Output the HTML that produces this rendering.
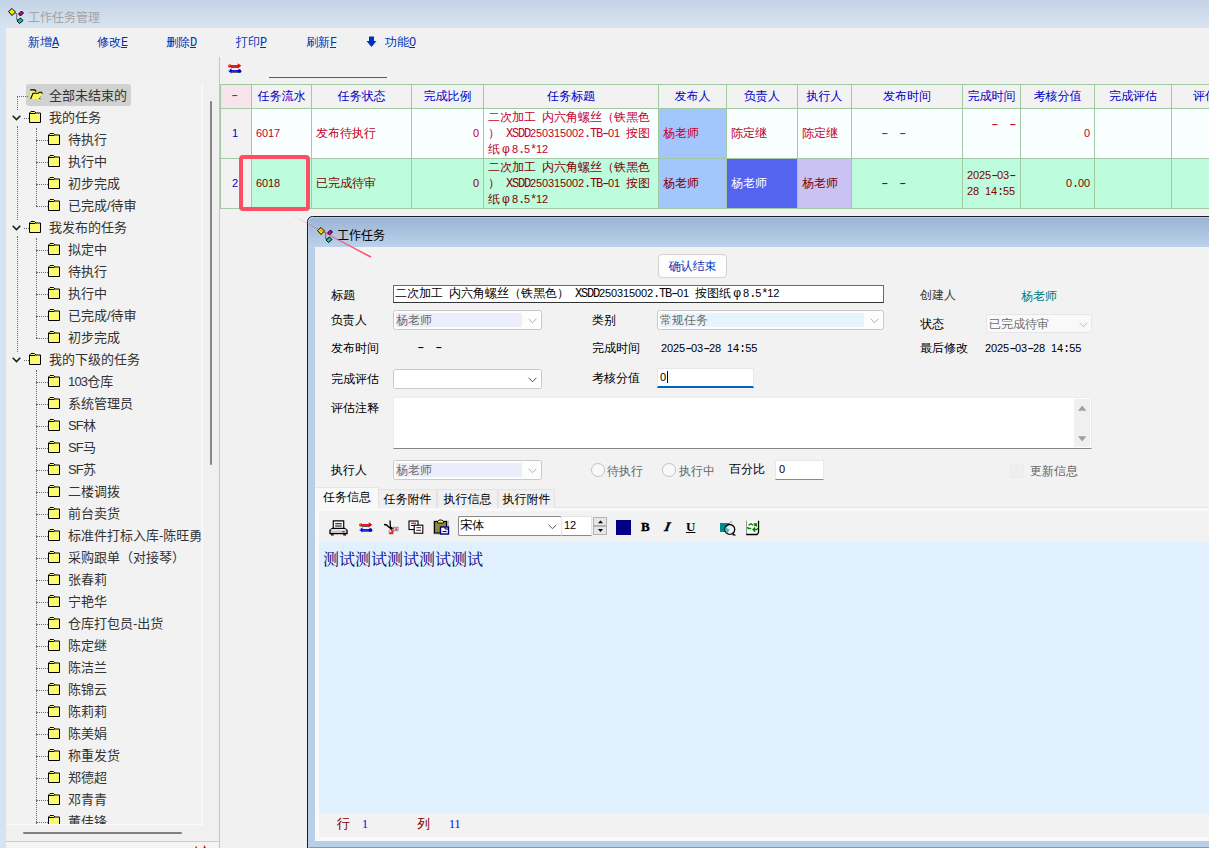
<!DOCTYPE html>
<html lang="zh-CN">
<head>
<meta charset="utf-8">
<title>工作任务管理</title>
<style>
*{box-sizing:border-box;margin:0;padding:0}
html,body{width:1209px;height:848px;overflow:hidden;background:#f0f0f0}
body{position:relative;font-family:"Liberation Sans","WenQuanYi Zen Hei Sharp","WenQuanYi Zen Hei",sans-serif;font-size:12px;color:#000;line-height:14px}
.a{position:absolute;white-space:nowrap}
.yh{font-family:"Liberation Sans","Noto Sans CJK SC",sans-serif}
.m{font-family:"Liberation Mono","WenQuanYi Zen Hei Sharp","WenQuanYi Zen Hei",monospace;letter-spacing:-1.2px}
.m i{font-family:"Liberation Sans",sans-serif;font-style:normal;font-size:11px;letter-spacing:-0.116px}
.m b{display:inline-block;font-weight:normal;transform:scaleX(1.55)}
.ls{letter-spacing:-0.8px}
.phi{display:inline-block;width:12px;text-align:center}
svg{position:absolute;overflow:visible}
/* main window */
#titlebar{left:0;top:0;width:1209px;height:28px;background:linear-gradient(#c3d3e6,#d9e4f0)}
#lstrip{left:0;top:28px;width:6px;height:820px;background:#d6e3f2}
#main{left:6px;top:28px;width:1203px;height:820px;background:#f1f1f1}
#apptitle{left:28px;top:10px;font-size:12px;line-height:16px;color:#a3a3a3}
.menu{top:35px;color:#0033b3;height:14px}
/* tree */
#tree{left:6px;top:84px;width:197px;height:741px;background:#f2f2f2;overflow:hidden}
.ti{position:absolute;height:22px;line-height:23px;font-size:13px;color:#333;white-space:nowrap;font-family:"Liberation Sans","Noto Sans CJK SC",sans-serif}
.sel{position:absolute;left:20px;top:0;width:105px;height:22px;background:#d1d1d1;border-radius:3px}
.dv{position:absolute;width:0;border-left:1px dotted #6a6a6a}
.dh{position:absolute;height:0;border-top:1px dotted #6a6a6a}
/* grid */
#grid{left:220px;top:84px;width:989px;height:126px;overflow:hidden}
.c{position:absolute;border-right:1px solid #a3c9a3;border-bottom:1px solid #a3c9a3;white-space:nowrap;overflow:hidden}
.h{top:0;height:25px;line-height:23px;text-align:center;color:#0000c8;background:#f2f2f2;border-top:1px solid #a3c9a3}
.r1{top:25px;height:50px;line-height:49px;color:#c4002b;background:#f9fefe;padding-left:4px}
.r2{top:75px;height:50px;line-height:49px;color:#800000;background:#bdfcdc;padding-left:4px}
.ml{line-height:16px;padding-top:0}
.m,.m i,.phi{line-height:0}
.rt{text-align:right;padding-right:4px}
/* dialog */
#dlg{left:307px;top:216px;width:910px;height:640px;border:1.5px solid #1c1c1c;border-radius:7px 0 0 0;background:#b8cfe9;overflow:hidden}
#dtitle{left:0;top:0;width:910px;height:30px;background:linear-gradient(#9bb5d6,#bdd2ea)}
#dbody{left:7px;top:29px;width:900px;height:593px;background:#f2f2f2;border-left:1px solid #fafafa}
.lb{position:absolute;white-space:nowrap;height:14px;line-height:14px;color:#000}
.cb{position:absolute;border:1px solid #c9c9c9;border-radius:2.5px;background:#fdfdfd;height:20px}
.cb i{position:absolute;left:2px;top:2px;bottom:2px;right:19px;background:#ecedfb}
.cb b{position:absolute;left:2px;top:2px;font-weight:normal;color:#6d6d6d;line-height:14px}
.tab{position:absolute;top:489px;height:19px;line-height:18px;text-align:center;border:1px solid #e3e3e3;border-bottom:none;background:#f0f0f0}
</style>
</head>
<body>
<div class="a" id="titlebar"></div>
<div class="a" id="lstrip"></div>
<div class="a" id="main"></div>
<svg style="left:8px;top:8px" width="17" height="17" viewBox="0 0 17 17">
<path d="M7 5.5 H8.6 V11.5 H10.5" fill="none" stroke="#7a7a7a" stroke-width="1.2"/>
<path d="M0.5 3.5 L4 0.5 L7.5 4 L4 7.5Z" fill="#f2ea00" stroke="#000" stroke-width="1"/>
<path d="M10.5 6 L13.5 3 L15.5 5 L12.5 8Z" fill="#d000a0" stroke="#000" stroke-width="1"/>
<path d="M9 13 L12.5 10 L15 12.5 L11.5 15.5Z" fill="#00c8c8" stroke="#000" stroke-width="1"/>
</svg>
<div class="a yh" id="apptitle">工作任务管理</div>
<div class="a menu" style="left:28px">新增<u class="m">A</u></div>
<div class="a menu" style="left:97px">修改<u class="m">E</u></div>
<div class="a menu" style="left:166px">删除<u class="m">D</u></div>
<div class="a menu" style="left:236px">打印<u class="m">P</u></div>
<div class="a menu" style="left:306px">刷新<u class="m">F</u></div>
<svg style="left:366px;top:36px" width="11" height="12" viewBox="0 0 11 12"><path d="M3 0.5H8V5H10.5L5.5 11L0.5 5H3Z" fill="#0030c0"/></svg>
<div class="a menu" style="left:385px">功能<u class="m">O</u></div>
<div class="a" style="left:203px;top:57px;width:16px;height:791px;background:#f0f0f0"></div>
<div class="a" style="left:219px;top:57px;width:1px;height:791px;background:#a9cdf2"></div>
<div class="a" style="left:202px;top:84px;width:1px;height:741px;background:#fbfbfb;z-index:2"></div>
<div class="a" style="left:210px;top:101px;width:2px;height:364px;background:#858585;border-radius:1px"></div>
<div class="a" style="left:6px;top:825px;width:213px;height:23px;background:#f0f0f0"></div>
<div class="a" style="left:23px;top:832px;width:159px;height:2px;background:#808080;border-radius:1px"></div>
<div class="a" style="left:6px;top:824px;width:197px;height:1px;background:#fbfbfb;z-index:2"></div>
<div class="a" style="left:6px;top:841px;width:213px;height:1px;background:#b5d3f0"></div>
<div class="a" style="left:6px;top:842px;width:213px;height:6px;background:#f4f4f4"></div>
<svg style="left:194px;top:845px" width="13" height="3" viewBox="0 0 13 3"><path d="M1 3L2 0.8L3.2 3Z" fill="#f00000"/><path d="M0.8 3L1.5 1.5L1.5 3Z" fill="#f0e000"/><path d="M9.6 3L10 0L12 3Z" fill="#f00000"/></svg>
<div class="a" id="tree">
<div class="sel"></div>
<div class="dv" style="left:11px;top:12px;height:14px"></div>
<div class="dv" style="left:11px;top:42px;height:94px"></div>
<div class="dv" style="left:11px;top:152px;height:116px"></div>
<div class="dh" style="left:11px;top:12px;width:11px"></div>
<div class="dh" style="left:18px;top:34px;width:5px"></div>
<div class="dh" style="left:18px;top:144px;width:5px"></div>
<div class="dh" style="left:18px;top:276px;width:5px"></div>
<div class="dv" style="left:30px;top:44px;height:78px"></div>
<div class="dv" style="left:30px;top:154px;height:100px"></div>
<div class="dv" style="left:30px;top:286px;height:460px"></div>
<div class="dh" style="left:30px;top:56px;width:12px"></div>
<div class="dh" style="left:30px;top:78px;width:12px"></div>
<div class="dh" style="left:30px;top:100px;width:12px"></div>
<div class="dh" style="left:30px;top:122px;width:12px"></div>
<div class="dh" style="left:30px;top:166px;width:12px"></div>
<div class="dh" style="left:30px;top:188px;width:12px"></div>
<div class="dh" style="left:30px;top:210px;width:12px"></div>
<div class="dh" style="left:30px;top:232px;width:12px"></div>
<div class="dh" style="left:30px;top:254px;width:12px"></div>
<div class="dh" style="left:30px;top:298px;width:12px"></div>
<div class="dh" style="left:30px;top:320px;width:12px"></div>
<div class="dh" style="left:30px;top:342px;width:12px"></div>
<div class="dh" style="left:30px;top:364px;width:12px"></div>
<div class="dh" style="left:30px;top:386px;width:12px"></div>
<div class="dh" style="left:30px;top:408px;width:12px"></div>
<div class="dh" style="left:30px;top:430px;width:12px"></div>
<div class="dh" style="left:30px;top:452px;width:12px"></div>
<div class="dh" style="left:30px;top:474px;width:12px"></div>
<div class="dh" style="left:30px;top:496px;width:12px"></div>
<div class="dh" style="left:30px;top:518px;width:12px"></div>
<div class="dh" style="left:30px;top:540px;width:12px"></div>
<div class="dh" style="left:30px;top:562px;width:12px"></div>
<div class="dh" style="left:30px;top:584px;width:12px"></div>
<div class="dh" style="left:30px;top:606px;width:12px"></div>
<div class="dh" style="left:30px;top:628px;width:12px"></div>
<div class="dh" style="left:30px;top:650px;width:12px"></div>
<div class="dh" style="left:30px;top:672px;width:12px"></div>
<div class="dh" style="left:30px;top:694px;width:12px"></div>
<div class="dh" style="left:30px;top:716px;width:12px"></div>
<div class="dh" style="left:30px;top:738px;width:12px"></div>
<svg style="left:24px;top:4.6px" width="13" height="11" viewBox="0 0 13 11"><path d="M0.3 1.5H5L6 3H11L12.2 4.5L10 10.2H0.5Z" fill="#f6f65a"/><path d="M0.2 0.9H4.8L6.2 2.7" fill="none" stroke="#000" stroke-width="1.3"/><path d="M0.6 10L3 4.2H8.5L9.5 3.2H11.5L12.3 4.8" fill="none" stroke="#000" stroke-width="1.1"/><path d="M9.6 10L10.6 7.5" stroke="#000" stroke-width="1.1" stroke-dasharray="1.2 1.2"/></svg>
<div class="ti" style="left:43px;top:0px">全部未结束的</div>
<svg style="left:6px;top:31px" width="9" height="6" viewBox="0 0 9 6"><path d="M0.7 0.8L4.5 4.6L8.3 0.8" fill="none" stroke="#1a1a1a" stroke-width="1.5"/></svg>
<svg style="left:23px;top:27px" width="12" height="12" viewBox="0 0 12 12"><path d="M0.5 11.5V2L2 0.5H5.5L7 2H11.5V11.5Z" fill="#fbfb72" stroke="#000" stroke-width="1"/><path d="M1 2.5H6.5" stroke="#000" stroke-width="1"/></svg>
<div class="ti" style="left:43px;top:22px">我的任务</div>
<svg style="left:42px;top:49px" width="12" height="12" viewBox="0 0 12 12"><path d="M0.5 11.5V2L2 0.5H5.5L7 2H11.5V11.5Z" fill="#fbfb72" stroke="#000" stroke-width="1"/><path d="M1 2.5H6.5" stroke="#000" stroke-width="1"/></svg>
<div class="ti" style="left:62px;top:44px">待执行</div>
<svg style="left:42px;top:71px" width="12" height="12" viewBox="0 0 12 12"><path d="M0.5 11.5V2L2 0.5H5.5L7 2H11.5V11.5Z" fill="#fbfb72" stroke="#000" stroke-width="1"/><path d="M1 2.5H6.5" stroke="#000" stroke-width="1"/></svg>
<div class="ti" style="left:62px;top:66px">执行中</div>
<svg style="left:42px;top:93px" width="12" height="12" viewBox="0 0 12 12"><path d="M0.5 11.5V2L2 0.5H5.5L7 2H11.5V11.5Z" fill="#fbfb72" stroke="#000" stroke-width="1"/><path d="M1 2.5H6.5" stroke="#000" stroke-width="1"/></svg>
<div class="ti" style="left:62px;top:88px">初步完成</div>
<svg style="left:42px;top:115px" width="12" height="12" viewBox="0 0 12 12"><path d="M0.5 11.5V2L2 0.5H5.5L7 2H11.5V11.5Z" fill="#fbfb72" stroke="#000" stroke-width="1"/><path d="M1 2.5H6.5" stroke="#000" stroke-width="1"/></svg>
<div class="ti" style="left:62px;top:110px">已完成/待审</div>
<svg style="left:6px;top:141px" width="9" height="6" viewBox="0 0 9 6"><path d="M0.7 0.8L4.5 4.6L8.3 0.8" fill="none" stroke="#1a1a1a" stroke-width="1.5"/></svg>
<svg style="left:23px;top:137px" width="12" height="12" viewBox="0 0 12 12"><path d="M0.5 11.5V2L2 0.5H5.5L7 2H11.5V11.5Z" fill="#fbfb72" stroke="#000" stroke-width="1"/><path d="M1 2.5H6.5" stroke="#000" stroke-width="1"/></svg>
<div class="ti" style="left:43px;top:132px">我发布的任务</div>
<svg style="left:42px;top:159px" width="12" height="12" viewBox="0 0 12 12"><path d="M0.5 11.5V2L2 0.5H5.5L7 2H11.5V11.5Z" fill="#fbfb72" stroke="#000" stroke-width="1"/><path d="M1 2.5H6.5" stroke="#000" stroke-width="1"/></svg>
<div class="ti" style="left:62px;top:154px">拟定中</div>
<svg style="left:42px;top:181px" width="12" height="12" viewBox="0 0 12 12"><path d="M0.5 11.5V2L2 0.5H5.5L7 2H11.5V11.5Z" fill="#fbfb72" stroke="#000" stroke-width="1"/><path d="M1 2.5H6.5" stroke="#000" stroke-width="1"/></svg>
<div class="ti" style="left:62px;top:176px">待执行</div>
<svg style="left:42px;top:203px" width="12" height="12" viewBox="0 0 12 12"><path d="M0.5 11.5V2L2 0.5H5.5L7 2H11.5V11.5Z" fill="#fbfb72" stroke="#000" stroke-width="1"/><path d="M1 2.5H6.5" stroke="#000" stroke-width="1"/></svg>
<div class="ti" style="left:62px;top:198px">执行中</div>
<svg style="left:42px;top:225px" width="12" height="12" viewBox="0 0 12 12"><path d="M0.5 11.5V2L2 0.5H5.5L7 2H11.5V11.5Z" fill="#fbfb72" stroke="#000" stroke-width="1"/><path d="M1 2.5H6.5" stroke="#000" stroke-width="1"/></svg>
<div class="ti" style="left:62px;top:220px">已完成/待审</div>
<svg style="left:42px;top:247px" width="12" height="12" viewBox="0 0 12 12"><path d="M0.5 11.5V2L2 0.5H5.5L7 2H11.5V11.5Z" fill="#fbfb72" stroke="#000" stroke-width="1"/><path d="M1 2.5H6.5" stroke="#000" stroke-width="1"/></svg>
<div class="ti" style="left:62px;top:242px">初步完成</div>
<svg style="left:6px;top:273px" width="9" height="6" viewBox="0 0 9 6"><path d="M0.7 0.8L4.5 4.6L8.3 0.8" fill="none" stroke="#1a1a1a" stroke-width="1.5"/></svg>
<svg style="left:23px;top:269px" width="12" height="12" viewBox="0 0 12 12"><path d="M0.5 11.5V2L2 0.5H5.5L7 2H11.5V11.5Z" fill="#fbfb72" stroke="#000" stroke-width="1"/><path d="M1 2.5H6.5" stroke="#000" stroke-width="1"/></svg>
<div class="ti" style="left:43px;top:264px">我的下级的任务</div>
<svg style="left:42px;top:291px" width="12" height="12" viewBox="0 0 12 12"><path d="M0.5 11.5V2L2 0.5H5.5L7 2H11.5V11.5Z" fill="#fbfb72" stroke="#000" stroke-width="1"/><path d="M1 2.5H6.5" stroke="#000" stroke-width="1"/></svg>
<div class="ti" style="left:62px;top:286px"><span class="ls">103</span>仓库</div>
<svg style="left:42px;top:313px" width="12" height="12" viewBox="0 0 12 12"><path d="M0.5 11.5V2L2 0.5H5.5L7 2H11.5V11.5Z" fill="#fbfb72" stroke="#000" stroke-width="1"/><path d="M1 2.5H6.5" stroke="#000" stroke-width="1"/></svg>
<div class="ti" style="left:62px;top:308px">系统管理员</div>
<svg style="left:42px;top:335px" width="12" height="12" viewBox="0 0 12 12"><path d="M0.5 11.5V2L2 0.5H5.5L7 2H11.5V11.5Z" fill="#fbfb72" stroke="#000" stroke-width="1"/><path d="M1 2.5H6.5" stroke="#000" stroke-width="1"/></svg>
<div class="ti" style="left:62px;top:330px"><span class="ls">SF</span>林</div>
<svg style="left:42px;top:357px" width="12" height="12" viewBox="0 0 12 12"><path d="M0.5 11.5V2L2 0.5H5.5L7 2H11.5V11.5Z" fill="#fbfb72" stroke="#000" stroke-width="1"/><path d="M1 2.5H6.5" stroke="#000" stroke-width="1"/></svg>
<div class="ti" style="left:62px;top:352px"><span class="ls">SF</span>马</div>
<svg style="left:42px;top:379px" width="12" height="12" viewBox="0 0 12 12"><path d="M0.5 11.5V2L2 0.5H5.5L7 2H11.5V11.5Z" fill="#fbfb72" stroke="#000" stroke-width="1"/><path d="M1 2.5H6.5" stroke="#000" stroke-width="1"/></svg>
<div class="ti" style="left:62px;top:374px"><span class="ls">SF</span>苏</div>
<svg style="left:42px;top:401px" width="12" height="12" viewBox="0 0 12 12"><path d="M0.5 11.5V2L2 0.5H5.5L7 2H11.5V11.5Z" fill="#fbfb72" stroke="#000" stroke-width="1"/><path d="M1 2.5H6.5" stroke="#000" stroke-width="1"/></svg>
<div class="ti" style="left:62px;top:396px">二楼调拨</div>
<svg style="left:42px;top:423px" width="12" height="12" viewBox="0 0 12 12"><path d="M0.5 11.5V2L2 0.5H5.5L7 2H11.5V11.5Z" fill="#fbfb72" stroke="#000" stroke-width="1"/><path d="M1 2.5H6.5" stroke="#000" stroke-width="1"/></svg>
<div class="ti" style="left:62px;top:418px">前台卖货</div>
<svg style="left:42px;top:445px" width="12" height="12" viewBox="0 0 12 12"><path d="M0.5 11.5V2L2 0.5H5.5L7 2H11.5V11.5Z" fill="#fbfb72" stroke="#000" stroke-width="1"/><path d="M1 2.5H6.5" stroke="#000" stroke-width="1"/></svg>
<div class="ti" style="left:62px;top:440px">标准件打标入库-陈旺勇</div>
<svg style="left:42px;top:467px" width="12" height="12" viewBox="0 0 12 12"><path d="M0.5 11.5V2L2 0.5H5.5L7 2H11.5V11.5Z" fill="#fbfb72" stroke="#000" stroke-width="1"/><path d="M1 2.5H6.5" stroke="#000" stroke-width="1"/></svg>
<div class="ti" style="left:62px;top:462px">采购跟单（对接琴）</div>
<svg style="left:42px;top:489px" width="12" height="12" viewBox="0 0 12 12"><path d="M0.5 11.5V2L2 0.5H5.5L7 2H11.5V11.5Z" fill="#fbfb72" stroke="#000" stroke-width="1"/><path d="M1 2.5H6.5" stroke="#000" stroke-width="1"/></svg>
<div class="ti" style="left:62px;top:484px">张春莉</div>
<svg style="left:42px;top:511px" width="12" height="12" viewBox="0 0 12 12"><path d="M0.5 11.5V2L2 0.5H5.5L7 2H11.5V11.5Z" fill="#fbfb72" stroke="#000" stroke-width="1"/><path d="M1 2.5H6.5" stroke="#000" stroke-width="1"/></svg>
<div class="ti" style="left:62px;top:506px">宁艳华</div>
<svg style="left:42px;top:533px" width="12" height="12" viewBox="0 0 12 12"><path d="M0.5 11.5V2L2 0.5H5.5L7 2H11.5V11.5Z" fill="#fbfb72" stroke="#000" stroke-width="1"/><path d="M1 2.5H6.5" stroke="#000" stroke-width="1"/></svg>
<div class="ti" style="left:62px;top:528px">仓库打包员-出货</div>
<svg style="left:42px;top:555px" width="12" height="12" viewBox="0 0 12 12"><path d="M0.5 11.5V2L2 0.5H5.5L7 2H11.5V11.5Z" fill="#fbfb72" stroke="#000" stroke-width="1"/><path d="M1 2.5H6.5" stroke="#000" stroke-width="1"/></svg>
<div class="ti" style="left:62px;top:550px">陈定继</div>
<svg style="left:42px;top:577px" width="12" height="12" viewBox="0 0 12 12"><path d="M0.5 11.5V2L2 0.5H5.5L7 2H11.5V11.5Z" fill="#fbfb72" stroke="#000" stroke-width="1"/><path d="M1 2.5H6.5" stroke="#000" stroke-width="1"/></svg>
<div class="ti" style="left:62px;top:572px">陈洁兰</div>
<svg style="left:42px;top:599px" width="12" height="12" viewBox="0 0 12 12"><path d="M0.5 11.5V2L2 0.5H5.5L7 2H11.5V11.5Z" fill="#fbfb72" stroke="#000" stroke-width="1"/><path d="M1 2.5H6.5" stroke="#000" stroke-width="1"/></svg>
<div class="ti" style="left:62px;top:594px">陈锦云</div>
<svg style="left:42px;top:621px" width="12" height="12" viewBox="0 0 12 12"><path d="M0.5 11.5V2L2 0.5H5.5L7 2H11.5V11.5Z" fill="#fbfb72" stroke="#000" stroke-width="1"/><path d="M1 2.5H6.5" stroke="#000" stroke-width="1"/></svg>
<div class="ti" style="left:62px;top:616px">陈莉莉</div>
<svg style="left:42px;top:643px" width="12" height="12" viewBox="0 0 12 12"><path d="M0.5 11.5V2L2 0.5H5.5L7 2H11.5V11.5Z" fill="#fbfb72" stroke="#000" stroke-width="1"/><path d="M1 2.5H6.5" stroke="#000" stroke-width="1"/></svg>
<div class="ti" style="left:62px;top:638px">陈美娟</div>
<svg style="left:42px;top:665px" width="12" height="12" viewBox="0 0 12 12"><path d="M0.5 11.5V2L2 0.5H5.5L7 2H11.5V11.5Z" fill="#fbfb72" stroke="#000" stroke-width="1"/><path d="M1 2.5H6.5" stroke="#000" stroke-width="1"/></svg>
<div class="ti" style="left:62px;top:660px">称重发货</div>
<svg style="left:42px;top:687px" width="12" height="12" viewBox="0 0 12 12"><path d="M0.5 11.5V2L2 0.5H5.5L7 2H11.5V11.5Z" fill="#fbfb72" stroke="#000" stroke-width="1"/><path d="M1 2.5H6.5" stroke="#000" stroke-width="1"/></svg>
<div class="ti" style="left:62px;top:682px">郑德超</div>
<svg style="left:42px;top:709px" width="12" height="12" viewBox="0 0 12 12"><path d="M0.5 11.5V2L2 0.5H5.5L7 2H11.5V11.5Z" fill="#fbfb72" stroke="#000" stroke-width="1"/><path d="M1 2.5H6.5" stroke="#000" stroke-width="1"/></svg>
<div class="ti" style="left:62px;top:704px">邓青青</div>
<svg style="left:42px;top:731px" width="12" height="12" viewBox="0 0 12 12"><path d="M0.5 11.5V2L2 0.5H5.5L7 2H11.5V11.5Z" fill="#fbfb72" stroke="#000" stroke-width="1"/><path d="M1 2.5H6.5" stroke="#000" stroke-width="1"/></svg>
<div class="ti" style="left:62px;top:726px">董佳锋</div>
</div>
<svg style="left:227.8px;top:63.2px" width="13.3" height="11.4" viewBox="0 0 14 12">
<path d="M3.2 3.8H10.5V4.9H3.2Z" fill="#000"/><path d="M3.5 9.1H11.5V10.1H3.5Z" fill="#000"/>
<circle cx="12.3" cy="8.6" r="1.7" fill="#000"/>
<circle cx="1.8" cy="3.1" r="1.7" fill="#f00000"/><path d="M1.5 2.2H11V3.9H1.5Z" fill="#f00000"/><path d="M10.3 0.2L14 3L10.3 5.8Z" fill="#f00000"/>
<path d="M3.7 5.6L0.3 8.3L3.7 11Z" fill="#0000e8"/><path d="M3 7.5H12V9.2H3Z" fill="#0000e8"/><circle cx="11.8" cy="8.3" r="1.8" fill="#0000e8"/>
<rect x="0.8" y="1.8" width="1.1" height="1.1" fill="#f8e800"/><rect x="0.9" y="7.6" width="1.1" height="1.1" fill="#00e8f8"/>
</svg>
<div class="a" style="left:269px;top:77px;width:118px;height:1px;background:#5a5a5a"></div>
<div class="a" id="grid">
<div class="a" style="left:0;top:0;width:1px;height:125px;background:#a3c9a3"></div>
<div class="c h" style="left:1px;width:31px;background:#f7e4ec;color:#f00000;padding-right:3px;line-height:21px"><span class="m"><b>-</b></span></div>
<div class="c h" style="left:32px;width:60px;">任务流水</div>
<div class="c h" style="left:92px;width:100px;">任务状态</div>
<div class="c h" style="left:192px;width:72px;">完成比例</div>
<div class="c h" style="left:264px;width:175px;">任务标题</div>
<div class="c h" style="left:439px;width:68px;">发布人</div>
<div class="c h" style="left:507px;width:71px;">负责人</div>
<div class="c h" style="left:578px;width:54px;">执行人</div>
<div class="c h" style="left:632px;width:111px;">发布时间</div>
<div class="c h" style="left:743px;width:58px;">完成时间</div>
<div class="c h" style="left:801px;width:74px;">考核分值</div>
<div class="c h" style="left:875px;width:77px;">完成评估</div>
<div class="c h" style="left:952px;width:89px;text-align:left;padding-left:21px">评估注释</div>
<div class="c r1" style="left:1px;width:31px;color:#0000c8;text-align:center;padding-left:0;padding-right:2px;background:#f2f2f2"><span class="m"><i>1</i></span></div>
<div class="c r1" style="left:32px;width:60px;"><span class="m"><i>6017</i></span></div>
<div class="c r1" style="left:92px;width:100px;">发布待执行</div>
<div class="c r1 rt" style="left:192px;width:72px;"><span class="m"><i>0</i></span></div>
<div class="c r1 ml" style="left:264px;width:175px;">二次加工<span class="m"> </span>内六角螺丝（铁黑色<br>）<span class="m"> XSDD<i>250315002</i>.TB<b>-</b><i>01</i> </span>按图<br>纸<span class="phi">φ</span><span class="m"><i>8</i>.<i>5</i>*<i>12</i></span></div>
<div class="c r1" style="left:439px;width:68px;background:#a3c6fd">杨老师</div>
<div class="c r1" style="left:507px;width:71px;">陈定继</div>
<div class="c r1" style="left:578px;width:54px;">陈定继</div>
<div class="c r1" style="left:632px;width:111px;padding-left:29px"><span class="m"><b>-</b>&nbsp;&nbsp;<b>-</b></span></div>
<div class="c r1" style="left:743px;width:58px;text-align:right;padding-right:5px;line-height:16px;padding-top:7px"><span class="m"><b>-</b>&nbsp;&nbsp;<b>-</b></span></div>
<div class="c r1 rt" style="left:801px;width:74px;"><span class="m"><i>0</i></span></div>
<div class="c r1" style="left:875px;width:77px;"></div>
<div class="c r1" style="left:952px;width:89px;"></div>
<div class="c r2" style="left:1px;width:31px;color:#0000c8;text-align:center;padding-left:0;padding-right:2px;background:#f2f2f2"><span class="m"><i>2</i></span></div>
<div class="c r2" style="left:32px;width:60px;"><span class="m"><i>6018</i></span></div>
<div class="c r2" style="left:92px;width:100px;">已完成待审</div>
<div class="c r2 rt" style="left:192px;width:72px;"><span class="m"><i>0</i></span></div>
<div class="c r2 ml" style="left:264px;width:175px;">二次加工<span class="m"> </span>内六角螺丝（铁黑色<br>）<span class="m"> XSDD<i>250315002</i>.TB<b>-</b><i>01</i> </span>按图<br>纸<span class="phi">φ</span><span class="m"><i>8</i>.<i>5</i>*<i>12</i></span></div>
<div class="c r2" style="left:439px;width:68px;background:#a3c6fd">杨老师</div>
<div class="c r2" style="left:507px;width:71px;background:#5365ee;color:#fff">杨老师</div>
<div class="c r2" style="left:578px;width:54px;background:#c9c2f2">杨老师</div>
<div class="c r2" style="left:632px;width:111px;padding-left:29px"><span class="m"><b>-</b>&nbsp;&nbsp;<b>-</b></span></div>
<div class="c r2" style="left:743px;width:58px;line-height:16px;padding-top:8px"><span class="m"><i>2025</i><b>-</b><i>03</i><b>-</b><br><i>28</i> <i>14</i>:<i>55</i></span></div>
<div class="c r2 rt" style="left:801px;width:74px;"><span class="m"><i>0</i>.<i>00</i></span></div>
<div class="c r2" style="left:875px;width:77px;"></div>
<div class="c r2" style="left:952px;width:89px;"></div>
</div>
<div class="a" style="left:239px;top:155px;width:71px;height:56px;border:4px solid #fc4f65;border-radius:4px"></div>
<div class="a" style="left:307px;top:216px;width:910px;height:640px;border:1.5px solid #1c1c1c;border-radius:5.5px 0 0 0;background:#b8cfe9"></div>
<div class="a" style="left:308.5px;top:217.5px;width:905px;height:30px;background:linear-gradient(#9bb5d6,#bdd2ea);border-radius:4.5px 0 0 0"></div>
<div class="a" style="left:315px;top:247px;width:900px;height:594px;background:#f2f2f2"></div>
<div class="a" style="left:309px;top:847px;width:900px;height:1px;background:#22c3d6"></div>
<svg style="left:317px;top:227px" width="17" height="17" viewBox="0 0 17 17">
<path d="M7 5.5 H8.6 V11.5 H10.5" fill="none" stroke="#7a7a7a" stroke-width="1.2"/>
<path d="M0.5 3.5 L4 0.5 L7.5 4 L4 7.5Z" fill="#f2ea00" stroke="#000" stroke-width="1"/>
<path d="M10.5 6 L13.5 3 L15.5 5 L12.5 8Z" fill="#d000a0" stroke="#000" stroke-width="1"/>
<path d="M9 13 L12.5 10 L15 12.5 L11.5 15.5Z" fill="#00c8c8" stroke="#000" stroke-width="1"/>
</svg>
<div class="a yh" style="left:337px;top:228px;font-size:12px;line-height:16px;color:#000">工作任务</div>
<div class="a" style="left:658px;top:254px;width:69px;height:24px;background:#fdfdfd;border:1px solid #d0d0d0;border-radius:4px;text-align:center;line-height:23px;color:#0033b3">确认结束</div>
<div class="lb" style="left:331px;top:288px;">标题</div>
<div class="a" style="left:393px;top:285px;width:491px;height:18px;background:#fff;border:1px solid #6a6a6a;border-bottom-color:#333;line-height:15px;padding-left:1px;overflow:hidden">二次加工<span class="m"> </span>内六角螺丝（铁黑色）<span class="m"> XSDD<i>250315002</i>.TB<b>-</b><i>01</i> </span>按图纸<span class="phi">φ</span><span class="m"><i>8</i>.<i>5</i>*<i>12</i></span></div>
<div class="lb" style="left:920px;top:288px;color:#3a3a3a">创建人</div>
<div class="lb" style="left:1021px;top:289px;color:#007d80">杨老师</div>
<div class="lb" style="left:331px;top:313px;">负责人</div>
<div class="cb" style="left:393px;top:310px;width:149px"><i style="background:#ecedfb"></i><b>杨老师</b><svg style="left:134px;top:7px" width="9" height="6" viewBox="0 0 9 6"><path d="M0.6 0.8L4.5 4.7L8.4 0.8" fill="none" stroke="#a6a6a6" stroke-width="0.9"/></svg></div>
<div class="lb" style="left:592px;top:313px;">类别</div>
<div class="cb" style="left:657px;top:310px;width:227px"><i style="background:#e7f4fc"></i><b>常规任务</b><svg style="left:212px;top:7px" width="9" height="6" viewBox="0 0 9 6"><path d="M0.6 0.8L4.5 4.7L8.4 0.8" fill="none" stroke="#a6a6a6" stroke-width="0.9"/></svg></div>
<div class="lb" style="left:920px;top:317px;">状态</div>
<div class="cb" style="left:986px;top:314px;width:106px;height:19px;border-color:#e6e6e6;background:#f9f9f9"><b style="left:2px;top:2px">已完成待审</b><svg style="left:92px;top:7px" width="9" height="6" viewBox="0 0 9 6"><path d="M0.6 0.8L4.5 4.7L8.4 0.8" fill="none" stroke="#b0b0b0" stroke-width="0.9"/></svg></div>
<div class="lb" style="left:331px;top:341px;">发布时间</div>
<div class="lb" style="left:417px;top:340px;"><span class="m"><b>-</b>&nbsp;&nbsp;<b>-</b></span></div>
<div class="lb" style="left:592px;top:341px;">完成时间</div>
<div class="lb" style="left:661px;top:341px;"><span class="m"><i>2025</i><b>-</b><i>03</i><b>-</b><i>28</i> <i>14</i>:<i>55</i></span></div>
<div class="lb" style="left:920px;top:341px;">最后修改</div>
<div class="lb" style="left:985px;top:341px;"><span class="m"><i>2025</i><b>-</b><i>03</i><b>-</b><i>28</i> <i>14</i>:<i>55</i></span></div>
<div class="lb" style="left:331px;top:372px;">完成评估</div>
<div class="cb" style="left:393px;top:369px;width:149px;background:#fff"><svg style="left:134px;top:7px" width="9" height="6" viewBox="0 0 9 6"><path d="M0.6 0.8L4.5 4.7L8.4 0.8" fill="none" stroke="#333" stroke-width="0.9"/></svg></div>
<div class="lb" style="left:592px;top:371px;">考核分值</div>
<div class="a" style="left:657px;top:368px;width:97px;height:20px;background:#fff;border:1px solid #e8e8e8;border-bottom:2px solid #0063c0;line-height:17px;padding-left:2px"><span class="m"><i>0</i></span><span style="display:inline-block;width:1px;height:12px;background:#000;vertical-align:-2px;margin-left:1px"></span></div>
<div class="lb" style="left:331px;top:401px;">评估注释</div>
<div class="a" style="left:393px;top:397px;width:699px;height:52px;background:#fff;border:1px solid #ececec;border-bottom:1px solid #868686"></div>
<div class="a" style="left:1074px;top:399px;width:16px;height:48px;background:#f0f0f0"></div>
<svg style="left:1078px;top:405px" width="8.4" height="6" viewBox="0 0 9 6"><path d="M0 6L4.5 0.3L9 6Z" fill="#a0a0a0"/></svg>
<svg style="left:1078px;top:436px" width="8.4" height="6" viewBox="0 0 9 6"><path d="M0 0L4.5 5.7L9 0Z" fill="#a0a0a0"/></svg>
<div class="lb" style="left:331px;top:463px;">执行人</div>
<div class="cb" style="left:393px;top:460px;width:149px"><i style="background:#ecedfb"></i><b>杨老师</b><svg style="left:134px;top:7px" width="9" height="6" viewBox="0 0 9 6"><path d="M0.6 0.8L4.5 4.7L8.4 0.8" fill="none" stroke="#a6a6a6" stroke-width="0.9"/></svg></div>
<div class="a" style="left:591px;top:463px;width:14px;height:14px;border:1px solid #c4c4c4;border-radius:50%;background:#f9f9f9"></div>
<div class="lb" style="left:607px;top:464px;color:#666">待执行</div>
<div class="a" style="left:662px;top:463px;width:14px;height:14px;border:1px solid #c4c4c4;border-radius:50%;background:#f9f9f9"></div>
<div class="lb" style="left:679px;top:464px;color:#666">执行中</div>
<div class="lb" style="left:729px;top:462px;">百分比</div>
<div class="a" style="left:775px;top:460px;width:49px;height:20px;background:#fff;border:1px solid #e8e8e8;border-bottom:1px solid #8a8a8a;line-height:17px;padding-left:3px"><span class="m"><i>0</i></span></div>
<div class="a" style="left:1010px;top:464px;width:14px;height:14px;background:#eeeeee;border:1px solid #ebebeb"></div>
<div class="lb" style="left:1030px;top:464px;color:#666">更新信息</div>
<div class="a" style="left:315px;top:508px;width:900px;height:333px;background:#f9f9f9"></div>
<div class="a" style="left:316px;top:507px;width:900px;height:1px;background:#e6e6e6"></div>
<div class="a" style="left:319px;top:511px;width:900px;height:31px;background:#f2f2f2"></div>
<div class="a" style="left:319px;top:813px;width:900px;height:24px;background:#f2f2f2"></div>
<div class="a" style="left:315px;top:487px;width:64px;height:22px;background:#f9f9f9;border:1px solid #e6e6e6;border-bottom:none;border-left:none;padding-left:1px;text-align:center;line-height:19px">任务信息</div>
<div class="tab" style="left:378px;width:59px">任务附件</div>
<div class="tab" style="left:437px;width:61px">执行信息</div>
<div class="tab" style="left:498px;width:57px">执行附件</div>
<svg style="left:328.6px;top:519px" width="19" height="17" viewBox="0 0 20 17">
<path d="M4.5 10V1.5H15.5V10" fill="#fff" stroke="#000" stroke-width="1.2"/>
<path d="M6.5 4.5H13.5M6.5 7H13.5" stroke="#000" stroke-width="1.1"/>
<path d="M1 15V11.5L3.5 9.5H16.5L19 11.5V15Z" fill="#c9c9c9" stroke="#000" stroke-width="1.3"/>
<path d="M2 11H18" stroke="#fff" stroke-width="1"/>
<rect x="14" y="12.3" width="2.5" height="1.2" fill="#e00000"/>
<path d="M2 16.2H5M15 16.2H18" stroke="#000" stroke-width="1.4"/>
</svg>
<svg style="left:358.5px;top:521.7px" width="13.3" height="11.4" viewBox="0 0 14 12">
<path d="M3.2 3.8H10.5V4.9H3.2Z" fill="#000"/><path d="M3.5 9.1H11.5V10.1H3.5Z" fill="#000"/>
<circle cx="12.3" cy="8.6" r="1.7" fill="#000"/>
<circle cx="1.8" cy="3.1" r="1.7" fill="#f00000"/><path d="M1.5 2.2H11V3.9H1.5Z" fill="#f00000"/><path d="M10.3 0.2L14 3L10.3 5.8Z" fill="#f00000"/>
<path d="M3.7 5.6L0.3 8.3L3.7 11Z" fill="#0000e8"/><path d="M3 7.5H12V9.2H3Z" fill="#0000e8"/><circle cx="11.8" cy="8.3" r="1.8" fill="#0000e8"/>
<rect x="0.8" y="1.8" width="1.1" height="1.1" fill="#f8e800"/><rect x="0.9" y="7.6" width="1.1" height="1.1" fill="#00e8f8"/>
</svg>
<svg style="left:383px;top:520px" width="16" height="15" viewBox="0 0 16 15">
<path d="M7 0.5L7.4 7" stroke="#000" stroke-width="1.3" fill="none"/>
<path d="M1 4.6L3.5 5L6 7.2L9.5 8.6" stroke="#000" stroke-width="1.5" fill="none"/>
<circle cx="8.2" cy="8.3" r="1.5" fill="#000"/>
<rect x="10.2" y="7.3" width="4.8" height="3.4" fill="#f2f2f2" stroke="#808080" stroke-width="0.9"/>
<path d="M11.8 9.1H14" stroke="#f00000" stroke-width="1.2"/><rect x="9.6" y="8" width="1.1" height="1.1" fill="#f00000"/>
<path d="M6.2 10V13.9H10.2V10.3" fill="none" stroke="#808080" stroke-width="0.9"/>
<path d="M8.2 9.6L9.3 11.5L9.2 13H6.6" fill="none" stroke="#f00000" stroke-width="1.3"/>
</svg>
<svg style="left:408px;top:520px" width="16" height="14" viewBox="0 0 16 14">
<rect x="1" y="1" width="9" height="8.5" fill="#fff" stroke="#000" stroke-width="1.1"/>
<path d="M3 3.2H8" stroke="#e00000" stroke-width="1.1"/><path d="M3 5.5H6" stroke="#000" stroke-width="0.9"/>
<rect x="6.2" y="5.2" width="8.6" height="8" fill="#fff" stroke="#000" stroke-width="1.1"/>
<path d="M8.5 7.6H13" stroke="#e00000" stroke-width="1.1"/><path d="M8.3 10.3H13" stroke="#000" stroke-width="0.9"/>
</svg>
<svg style="left:433px;top:519px" width="17" height="16" viewBox="0 0 17 16">
<rect x="0" y="1.5" width="16" height="14" fill="#bdbdbd"/>
<rect x="1.5" y="2.5" width="12" height="11.5" fill="#8a8a3c" stroke="#000" stroke-width="1.1"/>
<path d="M4.5 4V2.5L6 1H9L10.5 2.5V4Z" fill="#f6ee30" stroke="#000" stroke-width="0.9"/>
<rect x="7.5" y="8" width="8" height="7" fill="#fff" stroke="#000080" stroke-width="1.4"/>
<path d="M9.5 12.5H13.5" stroke="#000080" stroke-width="1.2"/>
<path d="M12 8V10H15.5" fill="none" stroke="#000080" stroke-width="1"/>
</svg>
<div class="a" style="left:458px;top:516px;width:104px;height:20px;background:#fff;border:1px solid #8a8a8a;border-right-color:#d0d0d0;border-radius:2px;line-height:17px;padding-left:1px">宋体<svg style="left:89px;top:7px" width="9" height="6" viewBox="0 0 9 6"><path d="M0.6 0.8L4.5 4.7L8.4 0.8" fill="none" stroke="#444" stroke-width="0.9"/></svg></div>
<div class="a" style="left:561px;top:516px;width:31px;height:20px;background:#fff;border:1px solid #e4e4e4;border-bottom:1px solid #8a8a8a;line-height:17px;padding-left:2px"><span class="m"><i>12</i></span></div>
<div class="a" style="left:593px;top:517px;width:14px;height:9px;background:#e6e6e6;border:1px solid #b4b4b4"></div>
<div class="a" style="left:593px;top:526px;width:14px;height:9px;background:#e6e6e6;border:1px solid #b4b4b4"></div>
<svg style="left:597.5px;top:519.5px" width="5" height="3.4" viewBox="0 0 6 4"><path d="M0 4L3 0.5L6 4Z" fill="#000"/></svg>
<svg style="left:597.5px;top:529px" width="5" height="3.4" viewBox="0 0 6 4"><path d="M0 0L3 3.5L6 0Z" fill="#000"/></svg>
<div class="a" style="left:616px;top:520px;width:15px;height:15px;background:#000080"></div>
<div class="a" style="left:641px;top:519px;-webkit-text-stroke:0.4px #000;font-family:'Liberation Serif',serif;font-weight:bold;font-size:13px;line-height:15px;color:#000">B</div>
<div class="a" style="left:665px;top:519px;-webkit-text-stroke:0.5px #000;transform:skewX(-12deg);font-family:'Liberation Serif',serif;font-weight:bold;font-style:italic;font-size:13px;line-height:15px;color:#000">I</div>
<div class="a" style="left:686px;top:519px;font-family:'Liberation Serif',serif;font-weight:bold;font-size:13px;line-height:15px;color:#000;text-decoration:underline">U</div>
<svg style="left:719px;top:519px" width="18" height="17" viewBox="0 0 18 17">
<path d="M9.8 4L13 1V4Z" fill="#c4c4c4"/>
<rect x="1" y="4" width="9.6" height="9" fill="#008a8c"/>
<circle cx="10.8" cy="10.4" r="4.9" fill="#eef4f4" stroke="#000" stroke-width="1.3"/>
<path d="M6.6 8.2A4.6 4.6 0 0 0 8.6 14.3L10.5 10.4Z" fill="#55b4b6"/>
<path d="M13.4 13.2L17.2 16.5H13.6Z" fill="#000"/>
</svg>
<svg style="left:745px;top:520px" width="15" height="16" viewBox="0 0 15 16">
<path d="M1.3 0.7H13.8V12.6L12 14.8H1.3Z" fill="#fff"/>
<path d="M1.6 0.7V14.5" stroke="#808080" stroke-width="0.9"/>
<path d="M13.5 0.7V12.6L12 14.5H1.2" fill="none" stroke="#000" stroke-width="1.3"/>
<path d="M3.5 5.2L6 3.8L8 5.2M8.6 4L11.3 4L11.3 6.6M9.3 6L11.5 3.8" fill="none" stroke="#008a00" stroke-width="1.4"/>
<path d="M2.8 8.6H6.2M3 7L2.6 8.6" fill="none" stroke="#008a00" stroke-width="1.5"/>
<path d="M8 9.5H12.5M10.2 7.5L8 9.5L10.2 11.8M12.3 8L12.8 9" fill="none" stroke="#008a00" stroke-width="1.4"/>
</svg>
<div class="a" style="left:319px;top:542px;width:900px;height:271px;background:#e1f0fe"></div>
<div class="a" style="left:323px;top:550px;font-family:'Liberation Serif','Noto Serif CJK SC',serif;font-size:16px;line-height:20px;color:#000080">测试测试测试测试测试</div>
<div class="lb" style="left:337px;top:817px;color:#800000;font-size:13px">行</div>
<div class="lb" style="left:362px;top:817px;color:#0000ff;font-family:'Liberation Serif',serif;font-size:12px">1</div>
<div class="lb" style="left:417px;top:817px;color:#800000;font-size:13px">列</div>
<div class="lb" style="left:449px;top:817px;color:#0000ff;font-family:'Liberation Serif',serif;font-size:12px">11</div>
<svg style="left:290px;top:212px" width="90" height="50" viewBox="290 212 90 50"><defs><linearGradient id="lg" gradientUnits="userSpaceOnUse" x1="293" y1="216" x2="371" y2="257"><stop offset="0" stop-color="#fa4a62" stop-opacity="0.1"/><stop offset="0.35" stop-color="#fa4a62" stop-opacity="0.75"/><stop offset="1" stop-color="#f83c58" stop-opacity="1"/></linearGradient></defs><path d="M293.4 216.0L371.1 256.5L370.5 257.6Z" fill="url(#lg)" stroke="url(#lg)" stroke-width="0.3"/></svg>
</body></html>
